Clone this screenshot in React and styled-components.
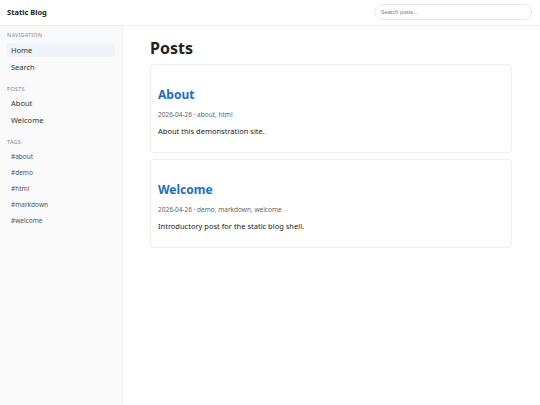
import React from "react";
import styled, { createGlobalStyle } from "styled-components";

const Global = createGlobalStyle`
  html, body { margin: 0; padding: 0; background: #fff; }
  body { font-family: "Noto Sans", "Open Sans", sans-serif; color: #222; }
  * { box-sizing: border-box; }
`;

const Page = styled.div`
  display: flex;
  flex-direction: column;
  min-height: 405px;
`;

const Header = styled.header`
  height: 26px;
  border-bottom: 1px solid #f0f0f0;
  display: flex;
  align-items: center;
  justify-content: space-between;
  padding: 0 8px 1px 7px;
  background: #fff;
`;

const Brand = styled.div`
  font-size: 7.5px;
  font-weight: 700;
  color: #222;
`;

const Search = styled.input`
  width: 158px;
  height: 16px;
  border: 1px solid #e8e8e8;
  border-radius: 8px;
  padding: 0 6px;
  font-family: "Liberation Sans", Arial, sans-serif;
  font-size: 5.5px;
  color: #333;
  outline: none;
  background: #fff;
  &::placeholder { color: #777; }
`;

const Body = styled.div`
  display: flex;
  flex: 1;
`;

const Sidebar = styled.aside`
  width: 123px;
  flex-shrink: 0;
  background: #fafafa;
  border-right: 1px solid #f0f0f0;
  padding: 5px 7px 0 7px;
  min-height: 379px;
`;

const Section = styled.div`
  margin-bottom: 11px;
`;

const Label = styled.div`
  font-size: 5.5px;
  line-height: 8px;
  letter-spacing: 0.04em;
  text-transform: uppercase;
  color: #8a8a8a;
  margin-bottom: ${(p) => p.$gap}px;
`;

const List = styled.div`
  display: flex;
  flex-direction: column;
  gap: ${(p) => p.$gap}px;
`;

const NavItem = styled.a`
  display: flex;
  align-items: center;
  height: 14px;
  padding: 0 4px;
  border-radius: 3px;
  font-size: 7.5px;
  color: #333;
  text-decoration: none;
  background: ${(p) => (p.$active ? "#f0f4f8" : "transparent")};
`;

const TagItem = styled.a`
  display: flex;
  align-items: center;
  height: 13px;
  padding: 0 4px;
  font-size: 6.5px;
  color: #555;
  text-decoration: none;
`;

const Main = styled.main`
  flex: 1;
  padding: 11px 28px 0 27px;
`;

const Title = styled.h1`
  margin: 0 0 5px 0;
  font-size: 16px;
  line-height: 22px;
  font-weight: 700;
  color: #222;
`;

const Cards = styled.div`
  display: flex;
  flex-direction: column;
  gap: 6px;
`;

const Card = styled.article`
  border: 1px solid #efefef;
  border-radius: 4px;
  padding: 22px 7px 15px 7px;
  background: #fff;
`;

const PostTitle = styled.h2`
  margin: 0;
  font-size: 12px;
  line-height: 16px;
  font-weight: 700;
  color: #1b6ec2;
`;

const Meta = styled.div`
  margin-top: 7px;
  font-size: 6.5px;
  line-height: 10px;
  color: #666;
`;

const Desc = styled.p`
  margin: 5px 0 0 0;
  font-size: 7.5px;
  line-height: 12px;
  color: #222;
`;

const posts = [
  { title: "About", date: "2026-04-26", tags: "about, html", desc: "About this demonstration site." },
  { title: "Welcome", date: "2026-04-26", tags: "demo, markdown, welcome", desc: "Introductory post for the static blog shell." },
];

const tags = ["#about", "#demo", "#html", "#markdown", "#welcome"];

export default function App() {
  return (
    <>
      <Global />
      <Page>
        <Header>
          <Brand>Static Blog</Brand>
          <Search placeholder="Search posts..." />
        </Header>
        <Body>
          <Sidebar>
            <Section>
              <Label $gap={4}>Navigation</Label>
              <List $gap={3}>
                <NavItem $active>Home</NavItem>
                <NavItem>Search</NavItem>
              </List>
            </Section>
            <Section>
              <Label $gap={3}>Posts</Label>
              <List $gap={3}>
                <NavItem>About</NavItem>
                <NavItem>Welcome</NavItem>
              </List>
            </Section>
            <Section>
              <Label $gap={4}>Tags</Label>
              <List $gap={3}>
                {tags.map((t) => (
                  <TagItem key={t}>{t}</TagItem>
                ))}
              </List>
            </Section>
          </Sidebar>
          <Main>
            <Title>Posts</Title>
            <Cards>
              {posts.map((p) => (
                <Card key={p.title}>
                  <PostTitle>{p.title}</PostTitle>
                  <Meta>{p.date} · {p.tags}</Meta>
                  <Desc>{p.desc}</Desc>
                </Card>
              ))}
            </Cards>
          </Main>
        </Body>
      </Page>
    </>
  );
}
